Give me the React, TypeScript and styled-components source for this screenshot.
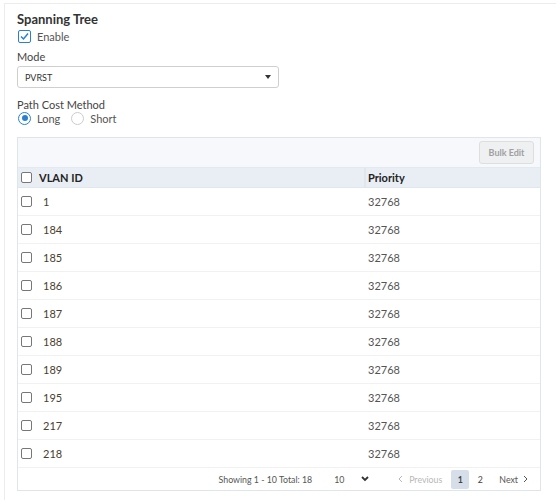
import React from "react";
import styled, { createGlobalStyle } from "styled-components";

const Global = createGlobalStyle`
  html, body { margin: 0; padding: 0; background: #fff; overflow: hidden; }
  body { font-family: Lato, "Noto Sans", sans-serif; color: #333; }
  * { box-sizing: border-box; }
`;

const Panel = styled.div`
  margin: 3px 0 0 4px;
  width: 560px;
  height: 520px;
  border: 1px solid #ececec;
  padding: 6px 0 0 12px;
`;

const Title = styled.div`
  font-size: 13px;
  font-weight: 700;
  color: #333;
  line-height: 18px;
`;

const CheckRow = styled.label`
  display: flex;
  align-items: center;
  gap: 6px;
  height: 20px;
  margin-top: -2px;
  font-size: 11px;
  color: #555;
  padding-left: 1px;
`;

const BlueBox = styled.span`
  width: 13px;
  height: 13px;
  border: 1.5px solid #2a7fd4;
  border-radius: 2px;
  display: flex;
  align-items: center;
  justify-content: center;
  background: #fff;
`;

const Label = styled.div<{ $top: number }>`
  font-size: 11px;
  color: #444;
  line-height: 14px;
  margin-top: ${(p) => p.$top}px;
`;

const Select = styled.div`
  margin-top: 2px;
  width: 262px;
  height: 22px;
  border: 1px solid #cfcfcf;
  border-radius: 3px;
  display: flex;
  align-items: center;
  justify-content: space-between;
  padding: 0 7px 0 7px;
  font-size: 9px;
  color: #333;
`;

const Caret = styled.span`
  width: 0;
  height: 0;
  border-left: 3.5px solid transparent;
  border-right: 3.5px solid transparent;
  border-top: 4px solid #333;
`;

const RadioRow = styled.div`
  display: flex;
  align-items: center;
  height: 16px;
  margin-top: -2px;
  font-size: 11px;
  color: #555;
`;

const RadioItem = styled.label`
  display: flex;
  align-items: center;
  gap: 6px;
  margin-right: 10px;
  padding-left: 1px;
`;

const Radio = styled.span<{ $on?: boolean }>`
  width: 13px;
  height: 13px;
  border-radius: 50%;
  border: 1px solid ${(p) => (p.$on ? "#2a7fd4" : "#ccc")};
  display: flex;
  align-items: center;
  justify-content: center;
  &::after {
    content: "";
    width: 6px;
    height: 6px;
    border-radius: 50%;
    background: ${(p) => (p.$on ? "#2a7fd4" : "transparent")};
  }
`;

const Table = styled.div`
  margin-top: 11px;
  width: 524px;
  border: 1px solid #dfe5ec;
`;

const Toolbar = styled.div`
  height: 30px;
  background: #f6f8fb;
  display: flex;
  align-items: center;
  justify-content: flex-end;
  padding-right: 6px;
  border-bottom: 1px solid #e3e9f0;
`;

const BulkButton = styled.button`
  height: 23px;
  width: 55px;
  border: 1px solid #dedede;
  background: #eef0f2;
  border-radius: 3px;
  font-family: inherit;
  font-size: 9px;
  font-weight: 700;
  color: #a0a0a0;
  padding: 0;
`;

const Row = styled.div<{ $head?: boolean }>`
  display: grid;
  grid-template-columns: 346px 1fr;
  height: ${(p) => (p.$head ? 20 : 28)}px;
  background: ${(p) => (p.$head ? "#e9eef4" : "#fff")};
  border-bottom: 1px solid ${(p) => (p.$head ? "#dfe6ee" : "#f1f1f1")};
  font-size: 11px;
  font-weight: ${(p) => (p.$head ? 700 : 400)};
  color: ${(p) => (p.$head ? "#222" : "#555")};
`;

const Cell = styled.div<{ $divider?: boolean; $pad: number }>`
  display: flex;
  align-items: center;
  padding-left: ${(p) => p.$pad}px;
  border-left: 2px solid ${(p) => (p.$divider ? "#dfe6ee" : "transparent")};
`;

const FirstCell = styled.div`
  display: flex;
  align-items: center;
  padding-left: 3px;
`;

const Box = styled.span`
  width: 11px;
  height: 11px;
  border: 1px solid #777;
  border-radius: 2px;
  background: #fff;
  margin-right: 7px;
`;

const Id = styled.span`
  color: #4b4030;
  padding-left: 4px;
`;

const Footer = styled.div`
  height: 22px;
  display: flex;
  align-items: center;
  justify-content: flex-end;
  font-size: 8.8px;
  color: #555;
  padding-right: 10px;
`;

const PageSize = styled.div`
  display: flex;
  align-items: center;
  margin-left: 22px;
  width: 35px;
  justify-content: space-between;
`;

const PageLink = styled.span<{ $dim?: boolean }>`
  color: ${(p) => (p.$dim ? "#b8b8b8" : "#555")};
  display: flex;
  align-items: center;
  gap: 4px;
`;

const PageNum = styled.span<{ $active?: boolean }>`
  width: 18px;
  height: 19px;
  display: flex;
  align-items: center;
  justify-content: center;
  border-radius: 2px;
  background: ${(p) => (p.$active ? "#d6dee9" : "transparent")};
  font-weight: ${(p) => (p.$active ? 700 : 400)};
  color: #444;
`;

const Pager = styled.div`
  display: flex;
  align-items: center;
  margin-left: 28px;
`;

const Spacer = styled.span<{ $w: number }>`
  width: ${(p) => p.$w}px;
`;

const Chevron = ({ dir, color }: { dir: "l" | "r" | "d"; color: string }) => {
  const d = dir === "l" ? "M5 1 L2 4 L5 7" : dir === "r" ? "M2 1 L5 4 L2 7" : "M1 2 L4 5 L7 2";
  return (
    <svg width="8" height="8" viewBox="0 0 8 8">
      <path d={d} fill="none" stroke={color} strokeWidth={dir === "d" ? 1.8 : 1} />
    </svg>
  );
};

const vlans = ["1", "184", "185", "186", "187", "188", "189", "195", "217", "218"];

export default function App() {
  return (
    <>
      <Global />
      <Panel>
        <Title>Spanning Tree</Title>
        <CheckRow>
          <BlueBox>
            <svg width="9" height="9" viewBox="0 0 9 9">
              <path d="M1 4.5 L3.5 7 L8 1.5" fill="none" stroke="#2a7fd4" strokeWidth="1.5" />
            </svg>
          </BlueBox>
          Enable
        </CheckRow>
        <Label $top={4}>Mode</Label>
        <Select>
          PVRST
          <Caret />
        </Select>
        <Label $top={10}>Path Cost Method</Label>
        <RadioRow>
          <RadioItem>
            <Radio $on />
            Long
          </RadioItem>
          <RadioItem>
            <Radio />
            Short
          </RadioItem>
        </RadioRow>
        <Table>
          <Toolbar>
            <BulkButton>Bulk Edit</BulkButton>
          </Toolbar>
          <Row $head>
            <FirstCell>
              <Box />
              VLAN ID
            </FirstCell>
            <Cell $divider $pad={2}>Priority</Cell>
          </Row>
          {vlans.map((v) => (
            <Row key={v}>
              <FirstCell>
                <Box />
                <Id>{v}</Id>
              </FirstCell>
              <Cell $pad={2}>32768</Cell>
            </Row>
          ))}
          <Footer>
            Showing 1 - 10 Total: 18
            <PageSize>
              10
              <Chevron dir="d" color="#333" />
            </PageSize>
            <Pager>
              <PageLink $dim>
                <Chevron dir="l" color="#b8b8b8" />
                Previous
              </PageLink>
              <Spacer $w={9} />
              <PageNum $active>1</PageNum>
              <Spacer $w={2} />
              <PageNum>2</PageNum>
              <Spacer $w={10} />
              <PageLink>
                Next
                <Chevron dir="r" color="#555" />
              </PageLink>
            </Pager>
          </Footer>
        </Table>
      </Panel>
    </>
  );
}
